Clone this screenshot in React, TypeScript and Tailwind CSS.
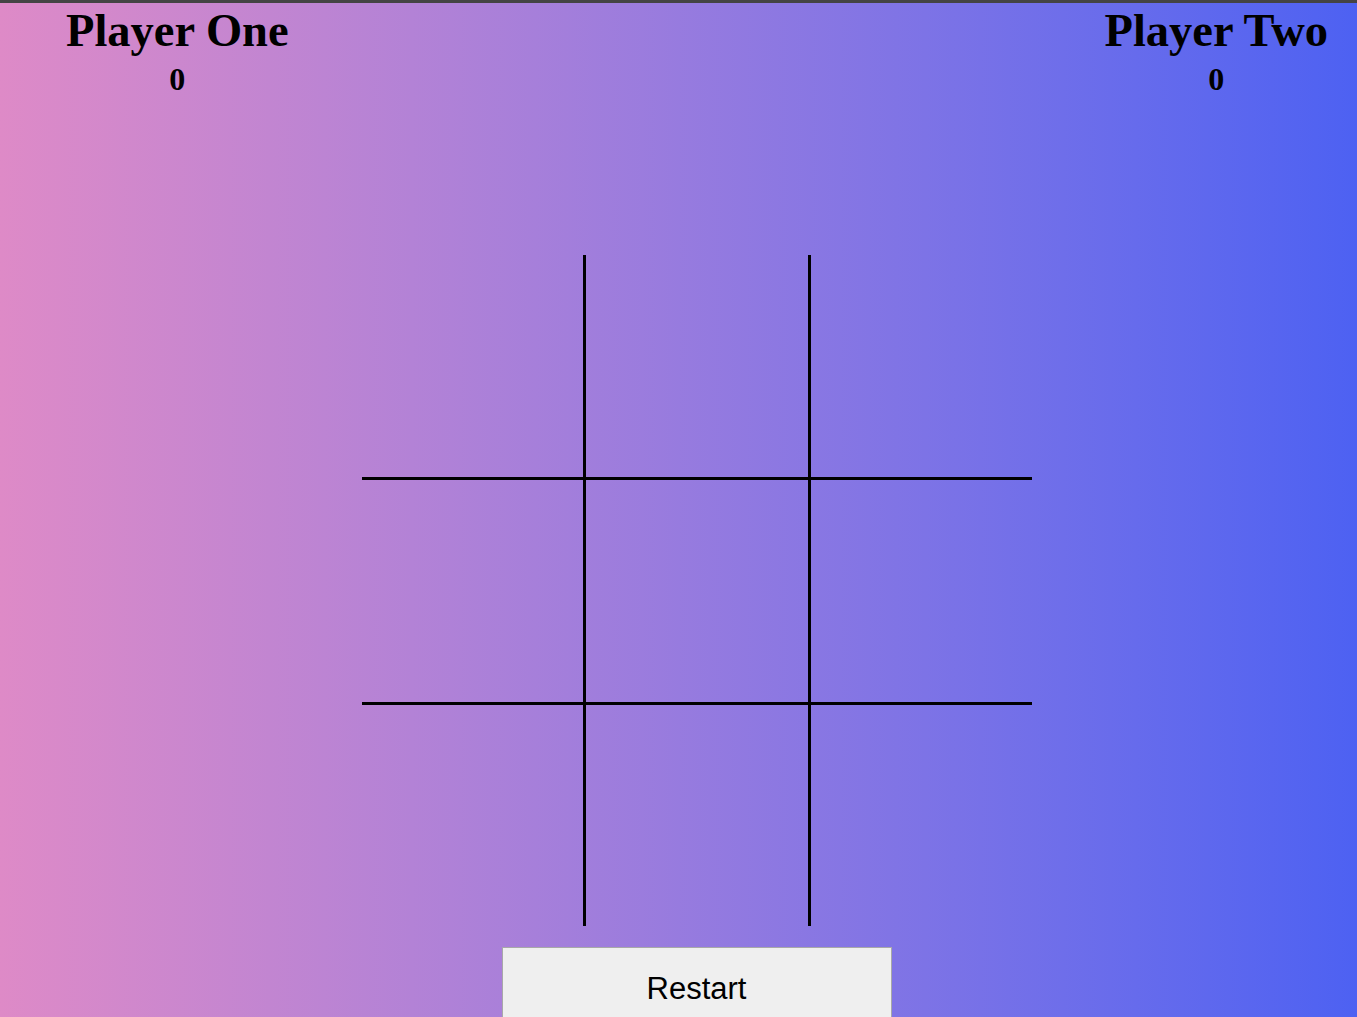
const players = [
  { name: "Player One", score: 0 },
  { name: "Player Two", score: 0 },
];

const Cell = ({ i }: { i: number }) => {
  const col = i % 3;
  const row = Math.floor(i / 3);
  return (
    <div
      className={[
        "h-full border-black",
        col === 1 ? "border-x-[3px]" : "",
        row === 1 ? "border-y-[3px]" : "",
      ].join(" ")}
    />
  );
};

const App = () => {
  return (
    <div className="w-full h-[1017px] overflow-hidden border-t-[3px] border-[#444444] bg-gradient-to-r from-[#de8ac7] to-[#4d61f2] font-['Liberation_Serif',serif] text-black">
      <header className="flex justify-between pl-[66px] pr-[29px] pt-[5px]">
        {players.map((p) => (
          <div key={p.name} className="flex flex-col items-center font-bold">
            <h1 className="text-[46.5px] leading-[46px]">{p.name}</h1>
            <span className="mt-[9px] text-[32px] leading-[32px]">{p.score}</span>
          </div>
        ))}
      </header>
      <div className="flex flex-col items-center pl-[36px] pt-[160px]">
        <div className="grid w-[670px] h-[671px] grid-cols-[221px_228px_221px] grid-rows-[222px_228px_221px]">
          {Array.from({ length: 9 }).map((_, i) => (
            <Cell key={i} i={i} />
          ))}
        </div>
        <button className="mt-[21px] w-[390px] h-[80px] pt-[4px] bg-[#efefef] border border-[#a8a8a8] font-['Liberation_Sans',sans-serif] text-[31px] text-black">
          Restart
        </button>
      </div>
    </div>
  );
};

export default App;
